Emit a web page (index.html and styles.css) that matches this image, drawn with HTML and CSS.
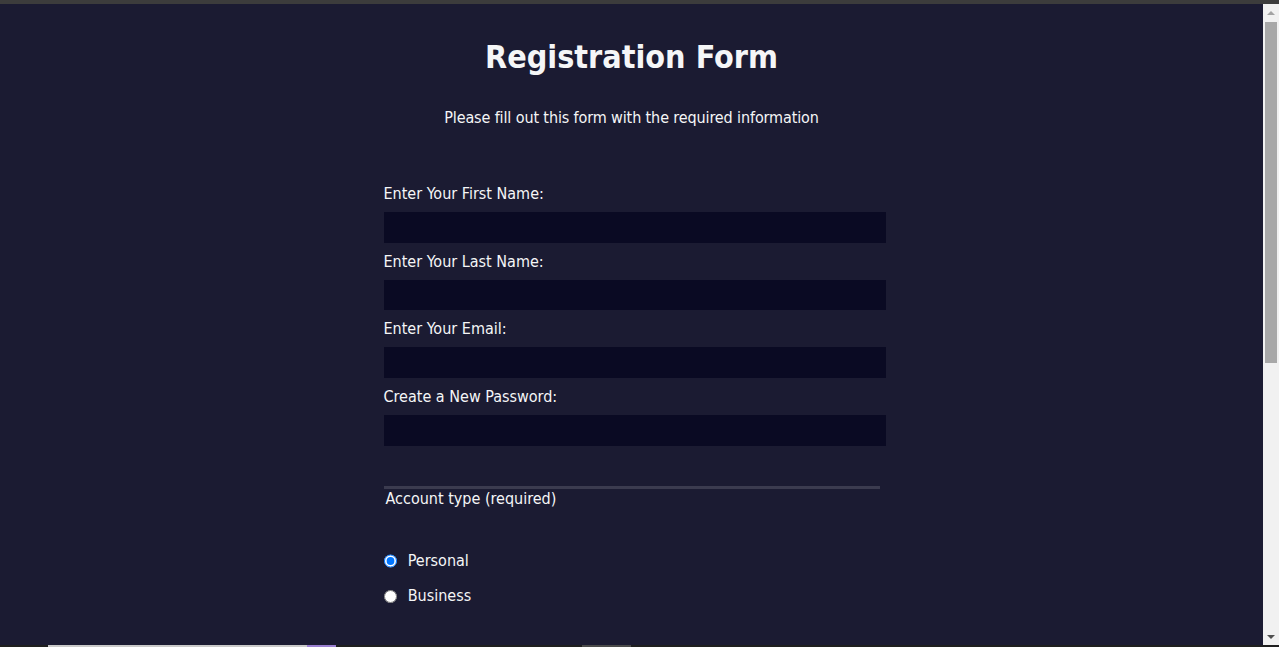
FILE: index.html
```html
<!DOCTYPE html>
<html lang="en">
<head>
<meta charset="utf-8">
<title>Registration Form</title>
<link rel="stylesheet" href="styles.css">
</head>
<body>
<div class="topstrip"></div>
<div class="viewport">
  <div class="page">
    <h1>Registration Form</h1>
    <p>Please fill out this form with the required information</p>
    <form>
      <fieldset>
        <label>Enter Your First Name: <input type="text"></label>
        <label>Enter Your Last Name: <input type="text"></label>
        <label>Enter Your Email: <input type="email"></label>
        <label>Create a New Password: <input type="password"></label>
      </fieldset>
      <fieldset>
        <legend>Account type (required)</legend>
        <label><input class="inline" type="radio" name="account-type" checked> Personal</label>
        <label><input class="inline" type="radio" name="account-type"> Business</label>
      </fieldset>
    </form>
  </div>
  <div class="scrollbar">
    <div class="sb-btn"><span class="arrow-up"></span></div>
    <div class="sb-thumb"></div>
    <div class="sb-fill"></div>
    <div class="sb-btn"><span class="arrow-down"></span></div>
  </div>
</div>
<div class="bottomstrip">
  <span class="seg seg-dark"></span>
  <span class="seg seg-light"></span>
  <span class="seg seg-purple"></span>
  <span class="seg seg-gap"></span>
  <span class="seg seg-grey"></span>
</div>
</body>
</html>
```
FILE: styles.css
```css
html, body {
  margin: 0;
  padding: 0;
  height: 100%;
  overflow: hidden;
}

body {
  background-color: #1b1b32;
  color: #f5f6f7;
  font-family: "DejaVu Sans Condensed", "DejaVu Sans", sans-serif;
  font-stretch: condensed;
  font-size: 16px;
  display: flex;
  flex-direction: column;
}

.topstrip {
  height: 4px;
  flex: none;
  background: #3c3c3c;
}

.viewport {
  flex: 1;
  min-height: 0;
  display: flex;
}

.page {
  flex: 1;
  min-width: 0;
  overflow: hidden;
}

/* scrollbar drawn by hand */
.scrollbar {
  width: 16px;
  flex: none;
  background: #f1f1f1;
  display: flex;
  flex-direction: column;
}

.sb-btn {
  height: 17px;
  flex: none;
  display: flex;
  align-items: center;
  justify-content: center;
}

.arrow-up {
  width: 0;
  height: 0;
  border-left: 4px solid transparent;
  border-right: 4px solid transparent;
  border-bottom: 4px solid #a3a3a3;
}

.arrow-down {
  width: 0;
  height: 0;
  border-left: 4px solid transparent;
  border-right: 4px solid transparent;
  border-top: 4px solid #505050;
}

.sb-thumb {
  height: 341px;
  flex: none;
  margin: 1px 2px 0 2px;
  background: #a8a8a8;
}

.sb-fill {
  flex: 1;
}

.bottomstrip {
  height: 2px;
  flex: none;
  display: flex;
  background: #1f1f1f;
}

.seg { display: block; height: 100%; }
.seg-dark { width: 48px; }
.seg-light { width: 259px; background: #c9c9c9; }
.seg-purple { width: 29px; background: #9a7fd1; }
.seg-gap { width: 246px; }
.seg-grey { width: 49px; background: #4a4a4a; }

h1, p {
  margin: 1em auto;
  text-align: center;
}

h1 {
  font-size: 32px;
  line-height: 38px;
  padding-top: 34px;
  margin-top: 0;
}

p {
  line-height: 20px;
  letter-spacing: -0.12px;
}

form {
  width: 60vw;
  max-width: 500px;
  min-width: 300px;
  margin: 0 auto;
  padding-bottom: 2em;
}

fieldset {
  border: none;
  padding: 2rem 0;
  margin: 0 2px;
  border-bottom: 3px solid #3b3b4f;
}

fieldset:first-of-type {
  padding-bottom: 31px;
}

fieldset:last-of-type {
  border-bottom: none;
}

legend {
  padding: 0 2px;
  line-height: 19px;
}

label {
  display: block;
  margin: 8px 0 9px;
  line-height: 19px;
}

input {
  margin: 9px 0 0 0;
  width: 100%;
  min-height: 2em;
  font-size: 13.333px;
  background-color: #0a0a23;
  border: 1px solid #0a0a23;
  color: #ffffff;
}

.inline {
  width: unset;
  margin: 0 0.5em 0 0;
  vertical-align: middle;
}
```
